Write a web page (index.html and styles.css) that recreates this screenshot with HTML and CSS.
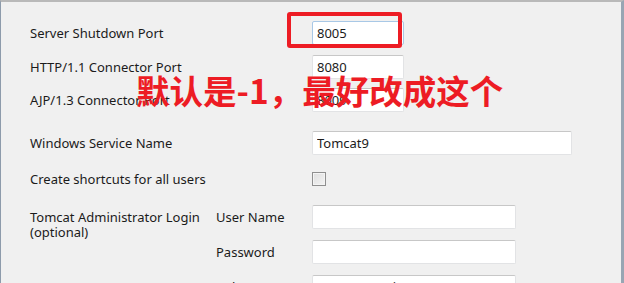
FILE: index.html
```html
<!DOCTYPE html>
<html>
<head>
    <meta charset="utf-8">
    <title>Tomcat Setup - Configuration</title>
    <link rel="stylesheet" href="styles.css">
</head>
<body>
    <div class="dialog">
        <div class="form-panel">
            <div class="form-row row-shutdown">
                <label class="form-label" for="shutdown">Server Shutdown Port</label>
                <input class="form-input port-input focused" type="text" id="shutdown" value="8005">
            </div>
            <div class="form-row row-http">
                <label class="form-label" for="http">HTTP/1.1 Connector Port</label>
                <input class="form-input port-input" type="text" id="http" value="8080">
            </div>
            <div class="form-row row-ajp">
                <label class="form-label" for="ajp">AJP/1.3 Connector Port</label>
                <input class="form-input port-input" type="text" id="ajp" value="8009">
            </div>
            <div class="form-row row-service">
                <label class="form-label" for="service">Windows Service Name</label>
                <input class="form-input service-input" type="text" id="service" value="Tomcat9">
            </div>
            <div class="form-row row-shortcuts">
                <label class="form-label" for="shortcuts">Create shortcuts for all users</label>
                <input class="form-check" type="checkbox" id="shortcuts">
            </div>
            <div class="admin-group">
                <div class="admin-label">Tomcat Administrator Login<br>(optional)</div>
                <div class="admin-fields">
                    <div class="admin-row">
                        <label class="sub-label" for="user">User Name</label>
                        <input class="form-input admin-input" type="text" id="user">
                    </div>
                    <div class="admin-row">
                        <label class="sub-label" for="password">Password</label>
                        <input class="form-input admin-input" type="password" id="password">
                    </div>
                    <div class="admin-row">
                        <label class="sub-label" for="roles">Roles</label>
                        <input class="form-input admin-input" type="text" id="roles" value="manager-gui">
                    </div>
                </div>
            </div>
        </div>

        <!-- annotation drawn over the screenshot -->
        <div class="note-box"></div>
        <div class="note-text">默认是-1，最好改成这个</div>
    </div>
</body>
</html>
```

FILE: styles.css
```css
body {
    margin: 0;
    background-color: #f0f0f0;
    font-family: "Noto Sans", "Liberation Sans", sans-serif;
    font-size: 13px;
    color: #1b1b1b;
    overflow: hidden;
}

.dialog {
    position: relative;
    height: 283px;
    overflow: hidden;
    box-sizing: border-box;
    border-top: 2px solid #b9b9b9;
    border-left: 1px solid #8d9bab;
    border-right: 3px solid #98a5b3;
    background-color: #f0f0f0;
}

.form-panel {
    padding: 19px 0 0 29px;
}

.form-row {
    display: flex;
    align-items: center;
    height: 24px;
}

.form-label {
    width: 282px;
    flex-shrink: 0;
}

.row-http {
    margin-top: 10px;
}

.row-ajp {
    margin-top: 9px;
}

.row-service {
    margin-top: 19px;
}

.row-shortcuts {
    margin-top: 12px;
}

.form-input {
    box-sizing: border-box;
    height: 24px;
    margin: 0;
    padding: 0 4px;
    border: 1px solid #e2e3e5;
    border-top-color: #c7c7c7;
    border-radius: 2px;
    background-color: #ffffff;
    font-family: "Noto Sans", "Liberation Sans", sans-serif;
    font-size: 13px;
    color: #1b1b1b;
    outline: none;
}

.port-input {
    width: 92px;
}

.focused {
    border-color: #a8c8e6;
}

.service-input {
    width: 260px;
}

.form-check {
    appearance: none;
    width: 14px;
    height: 14px;
    margin: 0;
    border: 1px solid #8f8f8f;
    background: linear-gradient(135deg, #dedede, #f4f4f4);
    box-shadow: inset 0 0 0 1px #f4f4f4;
}

.admin-group {
    display: flex;
    margin-top: 14px;
}

.admin-label {
    width: 186px;
    flex-shrink: 0;
    padding-top: 5px;
    line-height: 15px;
}

.admin-fields {
    display: flex;
    flex-direction: column;
    gap: 11px;
}

.admin-row {
    display: flex;
    align-items: center;
}

.sub-label {
    width: 96px;
    flex-shrink: 0;
}

.admin-input {
    width: 204px;
}

.note-box {
    position: absolute;
    left: 286px;
    top: 10px;
    width: 115px;
    height: 36px;
    box-sizing: border-box;
    border: 4px solid #ed1c24;
    border-radius: 3px;
}

.note-text {
    position: absolute;
    left: 135px;
    top: 64px;
    font-family: "Noto Sans CJK SC", sans-serif;
    font-weight: 700;
    font-size: 33.5px;
    line-height: 48px;
    color: #ed1c24;
    white-space: nowrap;
}
```
